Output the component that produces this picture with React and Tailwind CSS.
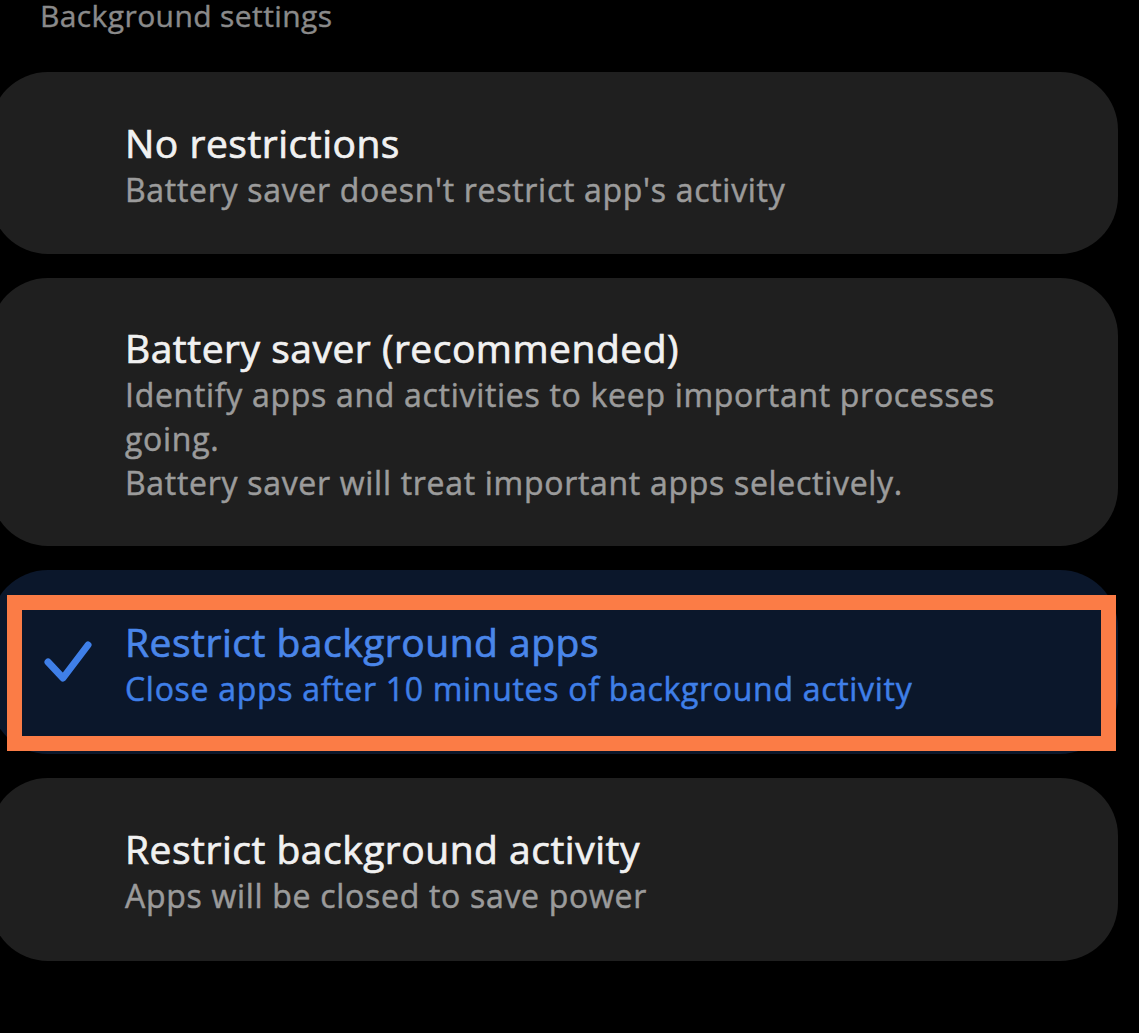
import React from "react";

const options = [
  {
    id: "none",
    title: "No restrictions",
    lines: ["Battery saver doesn't restrict app's activity"],
    height: "h-[182px]",
  },
  {
    id: "saver",
    title: "Battery saver (recommended)",
    lines: [
      "Identify apps and activities to keep important processes",
      "going.",
      "Battery saver will treat important apps selectively.",
    ],
    height: "h-[268px]",
  },
  {
    id: "apps",
    title: "Restrict background apps",
    lines: ["Close apps after 10 minutes of background activity"],
    height: "h-[184px]",
    selected: true,
  },
  {
    id: "activity",
    title: "Restrict background activity",
    lines: ["Apps will be closed to save power"],
    height: "h-[183px]",
  },
];

const CheckIcon = () => (
  <svg width="52" height="44" viewBox="0 0 52 44" fill="none">
    <path
      d="M5 22 L20 38 L45 5"
      stroke="#3f7fe8"
      strokeWidth="7"
      strokeLinecap="round"
      strokeLinejoin="round"
    />
  </svg>
);

const OptionCard = ({ option }) => {
  const sel = option.selected;
  return (
    <div
      className={`relative ml-[-10px] w-[1128px] ${option.height} rounded-[58px] flex items-center ${
        sel ? "bg-[#0b172b]" : "bg-[#1f1f1f]"
      }`}
    >
      <div className="w-[135px] shrink-0 flex justify-end pr-[30px]">
        {sel && <CheckIcon />}
      </div>
      <div className="flex flex-col pt-[4px]">
        <div
          className={`text-[39px] leading-[48px] tracking-[0.5px] [-webkit-text-stroke:0.7px_currentColor] ${
            sel ? "text-[#4a86ea]" : "text-[#f1f1f1]"
          }`}
        >
          {option.title}
        </div>
        <div
          className={`mt-[1px] text-[32px] leading-[44px] tracking-[0.7px] [-webkit-text-stroke:0.5px_currentColor] ${
            sel ? "text-[#3f7fe8]" : "text-[#9b9b9b]"
          }`}
        >
          {option.lines.map((l) => (
            <div key={l}>{l}</div>
          ))}
        </div>
      </div>
      {sel && (
        <div className="absolute left-[17px] top-[25px] w-[1109px] h-[156px] border-[15px] border-[#fb7c46] pointer-events-none" />
      )}
    </div>
  );
};

export default function App() {
  return (
    <div
      className="w-[1139px] h-[1033px] bg-black overflow-hidden"
      style={{ fontFamily: "'Open Sans', Lato, sans-serif" }}
    >
      <div className="pl-[40px] text-[30px] leading-[32px] tracking-[0.4px] [-webkit-text-stroke:0.4px_currentColor] text-[#8a8a8a]">
        Background settings
      </div>
      <div className="mt-[40px] flex flex-col gap-[24px]">
        {options.map((o) => (
          <OptionCard key={o.id} option={o} />
        ))}
      </div>
    </div>
  );
}
